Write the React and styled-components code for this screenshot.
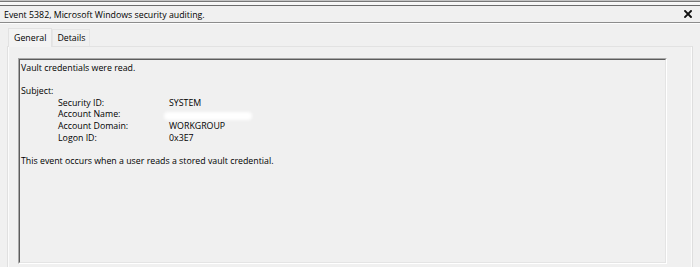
import React from 'react';
import styled, { createGlobalStyle } from 'styled-components';

const GlobalStyle = createGlobalStyle`
  html, body {
    margin: 0;
    padding: 0;
    background: #f0f0f0;
  }
  body {
    width: 700px;
    height: 267px;
    overflow: hidden;
    font-family: "Open Sans", "Liberation Sans", sans-serif;
    font-size: 8.8px;
    color: #000;
  }
`;

const Window = styled.div`
  width: 700px;
  height: 267px;
  display: flex;
  flex-direction: column;
  background: #f0f0f0;
  overflow: hidden;
`;

const TopEdge = styled.div`
  height: 4px;
  border-top: 1px solid #c4c4c4;
  border-bottom: 1px solid #6c6c6c;
  box-shadow: inset 0 1px 0 #777, inset 0 2px 0 #fafafa;
  background: #f6f6f6;
`;

const TitleBar = styled.div`
  height: 16px;
  display: flex;
  align-items: center;
  justify-content: space-between;
  padding: 0 8px 0 4px;
  border-bottom: 1px solid #8c8c8c;
  box-shadow: 0 1px 0 #fdfdfd;
`;

const Title = styled.span`
  line-height: 16px;
  padding-top: 2px;
`;

const CloseIcon = () => (
  <svg width="8" height="8" viewBox="0 0 8 8">
    <path d="M1 1 L7 7 M7 1 L1 7" stroke="#111" strokeWidth="1.9" strokeLinecap="square" />
  </svg>
);

const Content = styled.div`
  flex: 1;
  display: flex;
  flex-direction: column;
  padding: 5px 7px 0 7px;
`;

const TabStrip = styled.div`
  display: flex;
  align-items: flex-end;
  height: 18px;
  padding-left: 1px;
`;

const Tab = styled.div`
  height: ${(p) => (p.$active ? '18px' : '16px')};
  line-height: ${(p) => (p.$active ? '18px' : '16px')};
  padding: 0 ${(p) => (p.$active ? '5px' : '4px')};
  border: 1px solid ${(p) => (p.$active ? '#e2e2e2' : '#e6e6e6')};
  border-bottom: none;
  background: ${(p) => (p.$active ? '#f3f3f3' : '#f0f0f0')};
  margin-bottom: ${(p) => (p.$active ? '-1px' : '0')};
  position: relative;
  z-index: ${(p) => (p.$active ? 1 : 0)};
`;

const TabPanel = styled.div`
  flex: 1;
  border-top: 1px solid #e2e2e2;
  border-left: 1px solid #e0e0e0;
  border-right: 1px solid #dedede;
  box-shadow: inset 1px 0 0 #fbfbfb, inset -1px 0 0 #fbfbfb;
  padding: 11px 25px 0 10px;
  display: flex;
  flex-direction: column;
`;

const TextBox = styled.div`
  height: 204px;
  border-top: 1px solid #a8a8a8;
  border-left: 1px solid #a8a8a8;
  border-right: 1px solid #ffffff;
  border-bottom: 1px solid #ffffff;
`;

const TextInner = styled.div`
  height: 100%;
  box-sizing: border-box;
  border-top: 1px solid #5c5c5c;
  border-left: 1px solid #5c5c5c;
  border-right: 1px solid #e4e4e4;
  border-bottom: 1px solid #e4e4e4;
  padding: 3px 0 0 1px;
  line-height: 11.6px;
`;

const Line = styled.div`
  height: 11.6px;
  white-space: nowrap;
`;

const Blank = styled.div`
  height: 11.6px;
`;

const Fields = styled.div`
  display: grid;
  grid-template-columns: 111px auto;
  padding-left: 37px;
`;

const Label = styled.div`
  height: 11.6px;
  white-space: nowrap;
`;

const Value = styled.div`
  height: 11.6px;
  white-space: nowrap;
  display: flex;
  align-items: center;
`;

const Redacted = styled.span`
  display: block;
  width: 88px;
  height: 8px;
  margin-left: -5px;
  margin-top: 1px;
  border-radius: 5px;
  background: #ffffff;
  filter: blur(1.4px);
`;

const fields = [
  ['Security ID:', 'SYSTEM'],
  ['Account Name:', null],
  ['Account Domain:', 'WORKGROUP'],
  ['Logon ID:', '0x3E7'],
];

export default function App() {
  return (
    <>
      <GlobalStyle />
      <Window>
        <TopEdge />
        <TitleBar>
          <Title>Event 5382, Microsoft Windows security auditing.</Title>
          <CloseIcon />
        </TitleBar>
        <Content>
          <TabStrip>
            <Tab $active>General</Tab>
            <Tab>Details</Tab>
          </TabStrip>
          <TabPanel>
            <TextBox>
              <TextInner>
                <Line>Vault credentials were read.</Line>
                <Blank />
                <Line>Subject:</Line>
                <Fields>
                  {fields.map(([label, value]) => (
                    <React.Fragment key={label}>
                      <Label>{label}</Label>
                      <Value>{value === null ? <Redacted /> : value}</Value>
                    </React.Fragment>
                  ))}
                </Fields>
                <Blank />
                <Line>This event occurs when a user reads a stored vault credential.</Line>
              </TextInner>
            </TextBox>
          </TabPanel>
        </Content>
      </Window>
    </>
  );
}
